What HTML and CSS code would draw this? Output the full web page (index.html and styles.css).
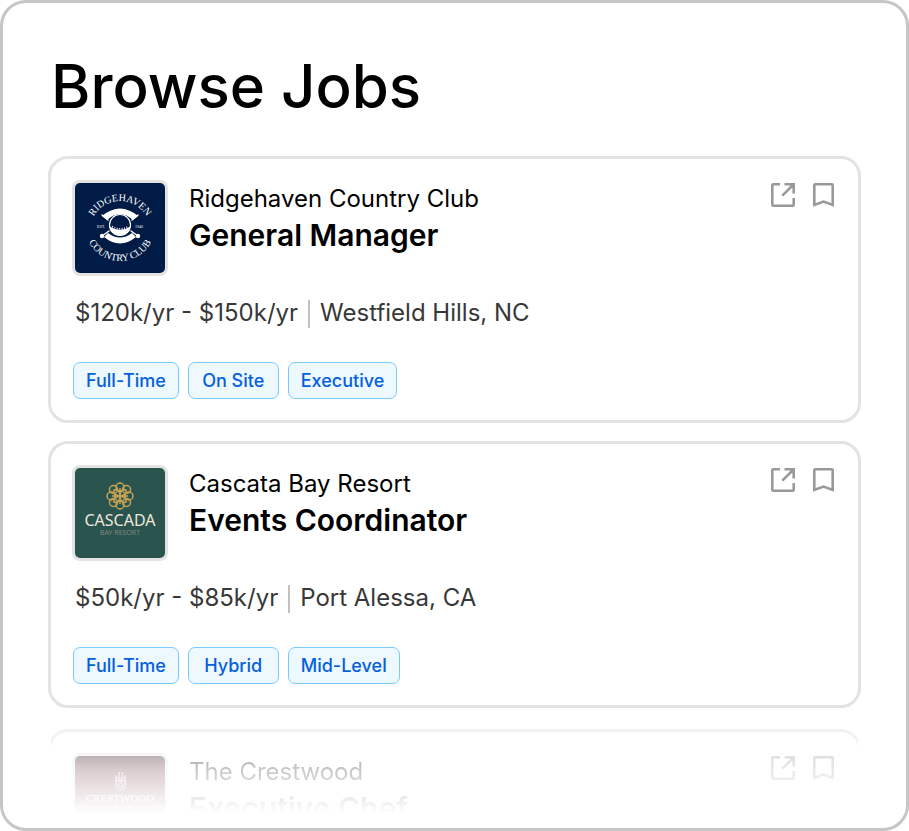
FILE: index.html
```html
<!DOCTYPE html>
<html lang="en">
<head>
    <meta charset="UTF-8">
    <meta name="viewport" content="width=device-width, initial-scale=1.0">
    <title>Browse Jobs</title>
    <link rel="stylesheet" href="styles.css">
</head>
<body>
    <!-- Shared icons -->
    <svg class="sprite" aria-hidden="true">
        <symbol id="icon-open" viewBox="0 0 24 24">
            <path d="M9 1.3H2.3Q1.3 1.3 1.3 2.3V21.7Q1.3 22.7 2.3 22.7H21.7Q22.7 22.7 22.7 21.7V15" fill="none" stroke="currentColor" stroke-width="2.6"/>
            <path d="M11.3 12.7L21.5 2.5" fill="none" stroke="currentColor" stroke-width="2.6"/>
            <path d="M13.5 0H24V10.5H21.4V5L18.8 2.6H13.5Z" fill="currentColor"/>
        </symbol>
        <symbol id="icon-bookmark" viewBox="0 0 21 24">
            <path d="M1.3 22V2.3Q1.3 1.3 2.3 1.3H18.7Q19.7 1.3 19.7 2.3V22L10.5 18.6Z" fill="none" stroke="currentColor" stroke-width="2.6"/>
        </symbol>
    </svg>

    <main class="jobs-panel">
        <h1 class="page-title">Browse Jobs</h1>

        <article class="job-card">
            <div class="job-header">
                <svg class="job-logo" viewBox="0 0 90 90" role="img" aria-label="Ridgehaven Country Club logo">
                    <rect width="90" height="90" fill="#001b45"/>
                    <defs>
                        <path id="arc-top" d="M14.500 48.500A30.500 30.500 0 0 1 75.500 48.500"/>
                        <path id="arc-bottom" d="M10 43A35 35 0 0 0 80 43"/>
                    </defs>
                    <g class="crest-text">
                        <text><textPath href="#arc-top" startOffset="50%">RIDGEHAVEN</textPath></text>
                        <text><textPath href="#arc-bottom" startOffset="50%">COUNTRY CLUB</textPath></text>
                        <text class="crest-small" x="26" y="45">EST.</text>
                        <text class="crest-small" x="64" y="45">1946</text>
                    </g>
                    <path d="M27 32L33 37M63 32L57 37M34 48L27 53M56 48L63 53" stroke="#fff" stroke-width="1.500" stroke-linecap="round"/>
                    <circle cx="27" cy="53" r="2.200" fill="#fff"/>
                    <circle cx="63" cy="53" r="2.200" fill="#fff"/>
                    <path d="M27 33Q45 18 63 33L58 37Q45 25 32 37Z" fill="#fff"/>
                    <path d="M29 54L33 50Q45 59 57 50L61 54Q45 67 29 54Z" fill="#fff"/>
                    <circle cx="45" cy="42" r="10.500" fill="#001b45" stroke="#fff" stroke-width="1.200"/>
                    <path d="M34.500 43.500Q45 50 55.500 43.500Q54 52.500 45 52.500Q36 52.500 34.500 43.500Z" fill="#fff"/>
                    <path d="M37 43.500Q45 48 53 43.500" fill="none" stroke="#fff" stroke-width="1.500" stroke-dasharray="1 1.500"/>
                </svg>
                <div class="job-heading">
                    <p class="company">Ridgehaven Country Club</p>
                    <h2 class="job-title">General Manager</h2>
                </div>
                <div class="job-actions">
                    <button class="icon-button" type="button" aria-label="Open job"><svg width="24" height="24"><use href="#icon-open"/></svg></button>
                    <button class="icon-button" type="button" aria-label="Save job"><svg width="21" height="24"><use href="#icon-bookmark"/></svg></button>
                </div>
            </div>
            <div class="job-meta">
                <span class="salary">$120k/yr - $150k/yr</span>
                <span class="location">Westfield Hills, NC</span>
            </div>
            <ul class="tags">
                <li class="tag">Full-Time</li>
                <li class="tag">On Site</li>
                <li class="tag">Executive</li>
            </ul>
        </article>

        <article class="job-card">
            <div class="job-header">
                <svg class="job-logo" viewBox="0 0 90 90" role="img" aria-label="Cascada Bay Resort logo">
                    <rect width="90" height="90" fill="#2a544e"/>
                    <g fill="none" stroke="#c5a253" stroke-width="1.500">
                        <circle cx="45" cy="19" r="4"/>
                        <circle cx="51.500" cy="21.500" r="4"/>
                        <circle cx="54" cy="28" r="4"/>
                        <circle cx="51.500" cy="34.500" r="4"/>
                        <circle cx="45" cy="37" r="4"/>
                        <circle cx="38.500" cy="34.500" r="4"/>
                        <circle cx="36" cy="28" r="4"/>
                        <circle cx="38.500" cy="21.500" r="4"/>
                        <path d="M45 20V36M37 28H53M45 28Q38 27 39 22Q45 21 45 28Q45 21 51 22Q52 27 45 28Q52 29 51 34Q45 35 45 28Q45 35 39 34Q38 29 45 28"/>
                    </g>
                    <text class="resort-name" x="45" y="58">CASCADA</text>
                    <text class="resort-sub" x="45" y="67">BAY RESORT</text>
                </svg>
                <div class="job-heading">
                    <p class="company">Cascata Bay Resort</p>
                    <h2 class="job-title">Events Coordinator</h2>
                </div>
                <div class="job-actions">
                    <button class="icon-button" type="button" aria-label="Open job"><svg width="24" height="24"><use href="#icon-open"/></svg></button>
                    <button class="icon-button" type="button" aria-label="Save job"><svg width="21" height="24"><use href="#icon-bookmark"/></svg></button>
                </div>
            </div>
            <div class="job-meta">
                <span class="salary">$50k/yr - $85k/yr</span>
                <span class="location">Port Alessa, CA</span>
            </div>
            <ul class="tags">
                <li class="tag">Full-Time</li>
                <li class="tag">Hybrid</li>
                <li class="tag">Mid-Level</li>
            </ul>
        </article>

        <!-- Next card fades out at the bottom of the list -->
        <article class="job-card job-card-preview">
            <div class="job-header">
                <svg class="job-logo" viewBox="0 0 90 90" role="img" aria-label="The Crestwood logo">
                    <defs>
                        <linearGradient id="crestwood-bg" x1="0" y1="0" x2="0" y2="1">
                            <stop offset="0" stop-color="#26080c"/>
                            <stop offset="0.2" stop-color="#5c1422"/>
                        </linearGradient>
                    </defs>
                    <rect width="90" height="90" fill="url(#crestwood-bg)"/>
                    <g fill="none" stroke="#fff" stroke-width="1.500" opacity="0.6">
                        <path d="M41 19V28M44 16V24M47 16V24M50 19V28M40 22H51M40 25H51"/>
                        <circle cx="45.500" cy="29" r="5"/>
                        <circle cx="45.500" cy="29" r="2"/>
                    </g>
                    <text class="crestwood-name" x="45" y="46">CRESTWOOD</text>
                </svg>
                <div class="job-heading">
                    <p class="company">The Crestwood</p>
                    <h2 class="job-title">Executive Chef</h2>
                </div>
                <div class="job-actions">
                    <button class="icon-button" type="button" aria-label="Open job"><svg width="24" height="24"><use href="#icon-open"/></svg></button>
                    <button class="icon-button" type="button" aria-label="Save job"><svg width="21" height="24"><use href="#icon-bookmark"/></svg></button>
                </div>
            </div>
        </article>
    </main>
</body>
</html>
```
FILE: styles.css
```css
* {
    box-sizing: border-box;
}

body {
    font-family: 'Inter', sans-serif;
    background-color: #fff;
    color: #000;
    margin: 0;
}

h1, h2, p, ul {
    margin: 0;
    padding: 0;
}

.sprite {
    display: none;
}

.jobs-panel {
    display: flex;
    flex-direction: column;
    height: 100vh;
    padding: 47px 45px 0;
    border: 3px solid #c6c6c6;
    border-radius: 26px;
    overflow: hidden;
}

.page-title {
    font-size: 60px;
    font-weight: 500;
    line-height: 72px;
    padding-left: 3px;
    margin-bottom: 34px;
}

.job-card {
    flex-shrink: 0;
    padding: 21px;
    border: 3px solid #e3e3e3;
    border-radius: 20px;
    margin-bottom: 18px;
}

.job-header {
    display: flex;
    align-items: flex-start;
}

.job-logo {
    width: 96px;
    height: 96px;
    border: 3px solid #e3e3e3;
    border-radius: 8px;
    flex-shrink: 0;
}

.job-heading {
    flex: 1;
    padding: 2px 0 0 21px;
}

.company {
    font-size: 24px;
    line-height: 34px;
}

.job-title {
    font-size: 30px;
    font-weight: 600;
    line-height: 38px;
}

.job-actions {
    display: flex;
    gap: 18px;
    padding: 3px 3px 0 0;
}

.icon-button {
    display: flex;
    padding: 0;
    border: none;
    background: none;
    color: #999;
    cursor: pointer;
}

.job-meta {
    display: flex;
    align-items: center;
    margin-top: 21px;
    padding-left: 3px;
    font-size: 24px;
    line-height: 32px;
    color: #383838;
}

.location::before {
    content: "";
    display: inline-block;
    width: 2px;
    height: 28px;
    margin: 0 10px;
    vertical-align: middle;
    background-color: #c4c0c0;
}

.tags {
    display: flex;
    gap: 9px;
    margin-top: 33px;
    padding-left: 1px;
    list-style: none;
}

.tag {
    min-width: 91px;
    padding: 0 12px;
    border: 1px solid #79caff;
    border-radius: 7px;
    background-color: #edf8ff;
    color: #0560dc;
    font-size: 18px;
    font-weight: 500;
    line-height: 35px;
    text-align: center;
}

.job-card-preview {
    height: 90px;
    margin-top: 3px;
    margin-bottom: 0;
    border-bottom: none;
    border-radius: 20px 20px 0 0;
    overflow: hidden;
    clip-path: inset(0 3px);
    -webkit-mask-image: linear-gradient(rgba(0, 0, 0, 0.5), rgba(0, 0, 0, 0.22) 40px, transparent 84px);
    mask-image: linear-gradient(rgba(0, 0, 0, 0.5), rgba(0, 0, 0, 0.22) 40px, transparent 84px);
}

/* Logo lettering */
.crest-text {
    font-family: 'Liberation Serif', serif;
    font-size: 10px;
    fill: #fff;
    text-anchor: middle;
}

.crest-small {
    font-size: 4px;
}

.resort-name {
    font-family: 'Noto Sans', sans-serif;
    font-size: 16px;
    fill: #f0e6dc;
    text-anchor: middle;
}

.resort-sub {
    font-family: 'Noto Sans', sans-serif;
    font-size: 7px;
    fill: #82867a;
    text-anchor: middle;
}

.crestwood-name {
    font-family: 'Liberation Serif', serif;
    font-size: 11px;
    fill: #fff;
    text-anchor: middle;
}
```
